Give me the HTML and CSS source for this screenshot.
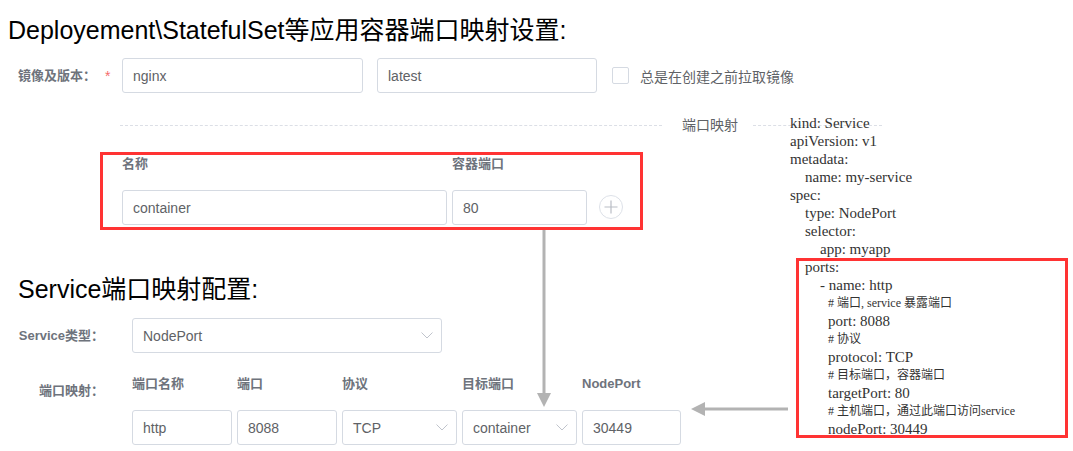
FILE: index.html
```html
<!DOCTYPE html>
<html lang="zh-CN">
<head>
<meta charset="utf-8">
<title>端口映射</title>
<link rel="stylesheet" href="styles.css">
</head>
<body>
<div class="page">
  <div class="main">
    <h1 class="title">Deployement\StatefulSet等应用容器端口映射设置:</h1>

    <div class="image-row">
      <span class="label image-label">镜像及版本：</span><span class="req">*</span>
      <div class="input w-image">nginx</div>
      <div class="input w-tag">latest</div>
      <span class="checkbox"></span><span class="check-text">总是在创建之前拉取镜像</span>
    </div>

    <div class="divider">
      <span class="line line-left"></span><span class="divider-text">端口映射</span><span class="line line-right"></span>
    </div>

    <div class="port-box">
      <div class="port-grid">
        <span class="col-label">名称</span>
        <span class="col-label">容器端口</span>
        <span></span>
        <div class="input">container</div>
        <div class="input">80</div>
        <svg class="plus" width="24" height="24" viewBox="0 0 24 24"><circle cx="12" cy="12" r="11.5" fill="none" stroke="#dde1e8"/><path d="M12 5.5v13M5.5 12h13" stroke="#b9bdc5" stroke-width="1.2"/></svg>
      </div>
    </div>

    <h2 class="title title-2">Service端口映射配置:</h2>

    <div class="svc-row">
      <span class="label form-label">Service类型：</span>
      <div class="input select w-svc"><span>NodePort</span><svg class="chev" width="12" height="7" viewBox="0 0 12 7"><path d="M0.5 0.5L6 6L11.5 0.5" fill="none" stroke="#c0c4cc"/></svg></div>
    </div>

    <div class="ports-row">
      <span class="label form-label ports-label">端口映射：</span>
      <div class="ports-grid">
        <span class="col-label">端口名称</span>
        <span class="col-label">端口</span>
        <span class="col-label">协议</span>
        <span class="col-label">目标端口</span>
        <span class="col-label">NodePort</span>
        <div class="input">http</div>
        <div class="input">8088</div>
        <div class="input select"><span>TCP</span><svg class="chev" width="12" height="7" viewBox="0 0 12 7"><path d="M0.5 0.5L6 6L11.5 0.5" fill="none" stroke="#c0c4cc"/></svg></div>
        <div class="input select"><span>container</span><svg class="chev" width="12" height="7" viewBox="0 0 12 7"><path d="M0.5 0.5L6 6L11.5 0.5" fill="none" stroke="#c0c4cc"/></svg></div>
        <div class="input">30449</div>
      </div>
    </div>
  </div>

  <div class="yaml">
    <div class="l0">kind: Service</div>
    <div class="l0">apiVersion: v1</div>
    <div class="l0">metadata:</div>
    <div class="l1">name: my-service</div>
    <div class="l0">spec:</div>
    <div class="l1">type: NodePort</div>
    <div class="l1">selector:</div>
    <div class="l2">app: myapp</div>
    <div class="hl">
      <div class="p1">ports:</div>
      <div class="p2">- name: http</div>
      <div class="p3 c"># 端口, service 暴露端口</div>
      <div class="p3">port: 8088</div>
      <div class="p3 c"># 协议</div>
      <div class="p3">protocol: TCP</div>
      <div class="p3 c"># 目标端口，容器端口</div>
      <div class="p3">targetPort: 80</div>
      <div class="p3 c"># 主机端口，通过此端口访问service</div>
      <div class="p3">nodePort: 30449</div>
    </div>
  </div>

  <svg class="arrows" width="1073" height="451" viewBox="0 0 1073 451">
    <line x1="544" y1="230" x2="544" y2="396" stroke="#b3b3b3" stroke-width="3"/>
    <polygon points="537,393 551,393 544,407" fill="#b3b3b3"/>
    <line x1="788" y1="409" x2="702" y2="409" stroke="#b3b3b3" stroke-width="3"/>
    <polygon points="705,402 705,416 691,409" fill="#b3b3b3"/>
  </svg>
</div>
</body>
</html>
```

FILE: styles.css
```css
body {
  margin: 0;
  background: #fff;
  font-family: "Liberation Sans", "Noto Sans CJK SC", sans-serif;
}

.page {
  position: relative;
  width: 1073px;
  height: 451px;
  display: flex;
  overflow: hidden;
}

.main {
  width: 790px;
  flex: none;
}

.title {
  margin: 15px 0 0 8px;
  font-size: 25px;
  font-weight: normal;
  line-height: 30px;
  color: #000;
  white-space: nowrap;
}

.title-2 {
  margin: 44px 0 0 18px;
  font-size: 25px;
}

.label {
  font-size: 13px;
  font-weight: bold;
  line-height: 16px;
  color: #6e737c;
  white-space: nowrap;
}

.col-label {
  font-size: 13px;
  font-weight: bold;
  line-height: 16px;
  color: #6e737c;
  white-space: nowrap;
}

.input {
  box-sizing: border-box;
  height: 35px;
  border: 1px solid #d5dae2;
  border-radius: 3px;
  padding: 0 10px;
  font-size: 14px;
  color: #606266;
  display: flex;
  align-items: center;
  white-space: nowrap;
}

.select {
  justify-content: space-between;
  padding-right: 8px;
}

.chev {
  flex: none;
}

/* row 1 */
.image-row {
  display: flex;
  align-items: center;
  height: 35px;
  margin-top: 13px;
}

.image-row > * {
  flex: none;
}

.image-label {
  margin-left: 18px;
  width: 87px;
}

.req {
  width: 17px;
  color: #f56c6c;
  font-size: 14px;
  line-height: 16px;
}

.w-image {
  width: 241px;
}

.w-tag {
  width: 220px;
  margin-left: 14px;
}

.checkbox {
  box-sizing: border-box;
  width: 17px;
  height: 17px;
  border: 1px solid #d5dae2;
  border-radius: 2px;
  margin-left: 15px;
}

.check-text {
  margin-left: 11px;
  font-size: 14px;
  color: #606266;
  white-space: nowrap;
}

/* divider */
.divider {
  display: flex;
  align-items: center;
  height: 20px;
  width: 762px;
  margin: 22px 0 0 120px;
}

.divider .line {
  border-top: 1px dashed #dcdfe6;
}

.line-left {
  width: 542px;
  flex: none;
}

.line-right {
  flex: 1;
}

.divider-text {
  padding: 0 15px 0 20px;
  font-size: 14px;
  line-height: 20px;
  color: #606266;
  white-space: nowrap;
}

/* highlighted container port block */
.port-box {
  box-sizing: border-box;
  width: 543px;
  margin: 17px 0 0 100px;
  border: 3px solid #ff3333;
  padding: 1px 0 2px 19px;
}

.port-grid {
  display: grid;
  grid-template-columns: 325px 135px 31px;
  column-gap: 5px;
  row-gap: 18px;
  align-items: center;
}

.plus {
  justify-self: end;
  margin-top: -2px;
}

/* service rows */
.svc-row {
  display: flex;
  align-items: center;
  margin-top: 14px;
}

.form-label {
  width: 104px;
  text-align: right;
  margin-right: 28px;
  flex: none;
}

.w-svc {
  width: 310px;
}

.ports-row {
  display: flex;
  align-items: flex-start;
  margin-top: 23px;
}

.ports-label {
  padding-top: 7px;
}

.ports-grid {
  display: grid;
  grid-template-columns: 100px 100px 115px 115px 99px;
  column-gap: 5px;
  row-gap: 18px;
}

/* yaml */
.yaml {
  flex: 1;
  padding-top: 114px;
  font-family: "Liberation Serif", "Noto Sans CJK SC", serif;
  font-size: 15px;
  line-height: 18px;
  color: #333;
  white-space: nowrap;
}

.l1 { padding-left: 15px; }
.l2 { padding-left: 30px; }

.hl {
  margin-left: 6px;
  width: 272px;
  box-shadow: inset 0 0 0 3px #ff3333;
}

.p1 { padding-left: 9px; }
.p2 { padding-left: 24px; }
.p3 { padding-left: 32px; }

.c {
  font-size: 12px;
}

.arrows {
  position: absolute;
  left: 0;
  top: 0;
  pointer-events: none;
}
```
